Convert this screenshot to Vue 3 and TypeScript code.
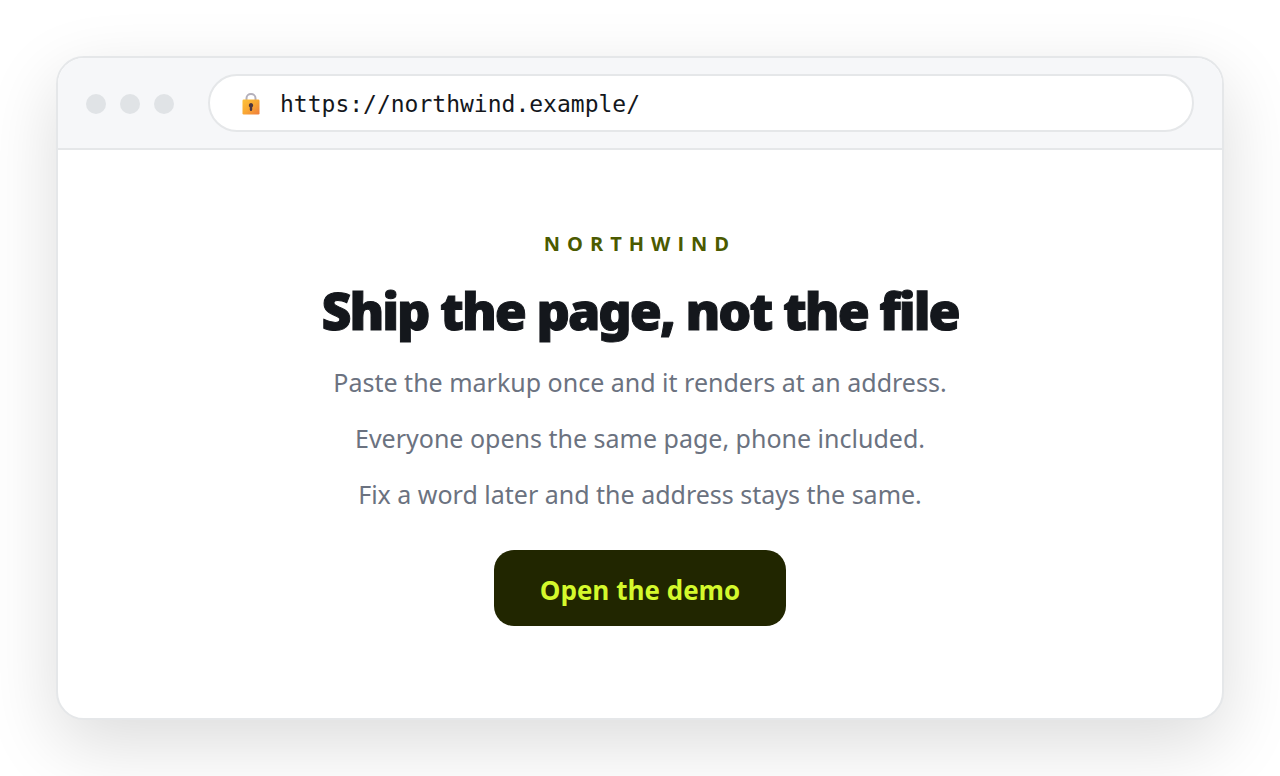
<script setup lang="ts">
import { ref } from 'vue'

const address = ref('https://northwind.example/')
const dots = [1, 2, 3]
const lines: string[] = [
  'Paste the markup once and it renders at an address.',
  'Everyone opens the same page, phone included.',
  'Fix a word later and the address stays the same.',
]
</script>

<template>
  <div class="stage">
    <div class="window">
      <header class="toolbar">
        <div class="dots" aria-hidden="true">
          <span v-for="dot in dots" :key="dot" class="dot"></span>
        </div>
        <div class="address">
          <svg class="lock" viewBox="0 0 18 22" aria-hidden="true">
            <defs>
              <linearGradient id="lock-body" x1="0" y1="0" x2="1" y2="1">
                <stop offset="0" stop-color="#fcc13a" />
                <stop offset="0.5" stop-color="#f9a833" />
                <stop offset="1" stop-color="#ef7b3c" />
              </linearGradient>
            </defs>
            <path d="M4.5 8V5.2a4.5 4.2 0 0 1 9 0V8" fill="none" stroke="#b4b0bb" stroke-width="2" />
            <rect x="0.5" y="6.5" width="17" height="15" rx="1.2" fill="url(#lock-body)" />
            <path d="M9 10a2.3 2.3 0 0 1 1.2 4.2v2.6a1.2 1.2 0 0 1-2.4 0v-2.6a2.3 2.3 0 0 1 1.2-4.2z" fill="#4b3541" />
          </svg>
          <input v-model="address" class="url" type="text" aria-label="Address" spellcheck="false" />
        </div>
      </header>
      <main class="hero">
        <p class="eyebrow">NORTHWIND</p>
        <h1 class="title">Ship the page, not the file</h1>
        <p v-for="line in lines" :key="line" class="line">{{ line }}</p>
        <button class="cta" type="button">Open the demo</button>
      </main>
    </div>
  </div>
</template>

<style>
body {
  margin: 0;
  background: #fff;
}
</style>

<style scoped>
.stage {
  box-sizing: border-box;
  min-height: 100vh;
  padding: 56px;
  overflow: hidden;
  font-family: "Noto Sans", "Open Sans", sans-serif;
}

.window {
  border: 2px solid #e5e7e9;
  border-radius: 28px;
  overflow: hidden;
  background: #fff;
  box-shadow: 0 24px 72px rgba(0, 0, 0, 0.14);
}

.toolbar {
  display: flex;
  align-items: center;
  gap: 34px;
  padding: 16px 28px;
  border-bottom: 2px solid #e5e7e9;
  background: #f6f7f9;
}

.dots {
  display: flex;
  gap: 14px;
  padding-top: 2px;
}

.dot {
  width: 20px;
  height: 20px;
  border-radius: 50%;
  background: #e0e3e6;
}

.address {
  display: flex;
  flex: 1;
  align-items: center;
  gap: 20px;
  padding: 2px 32px 0;
  border: 2px solid #e5e7e9;
  border-radius: 29px;
  background: #fff;
}

.lock {
  width: 18px;
  height: 22px;
}

.url {
  flex: 1;
  min-width: 0;
  height: 52px;
  padding: 0;
  border: 0;
  outline: 0;
  background: transparent;
  color: #14171c;
  font: 23px "DejaVu Sans Mono", monospace;
}

.hero {
  display: flex;
  flex-direction: column;
  align-items: center;
  padding: 80px 32px 92px;
  text-align: center;
}

.eyebrow {
  margin: 0 0 20px;
  color: #4b5a00;
  font-family: "Open Sans", "Noto Sans", sans-serif;
  font-size: 20px;
  font-weight: 700;
  line-height: 28px;
  letter-spacing: 7px;
}

.title {
  margin: 0 0 12px;
  color: #14171c;
  font-size: 52px;
  font-weight: 900;
  line-height: 64px;
  letter-spacing: -2px;
  -webkit-text-stroke: 1px #14171c;
}

.line {
  margin: 0;
  color: #6b7280;
  font-size: 25px;
  line-height: 56px;
}

.cta {
  height: 76px;
  margin-top: 28px;
  padding: 4px 46px 0;
  border: 0;
  border-radius: 20px;
  background: #212600;
  color: #d4f92c;
  font: 700 26px "Open Sans", "Noto Sans", sans-serif;
  cursor: pointer;
}
</style>
